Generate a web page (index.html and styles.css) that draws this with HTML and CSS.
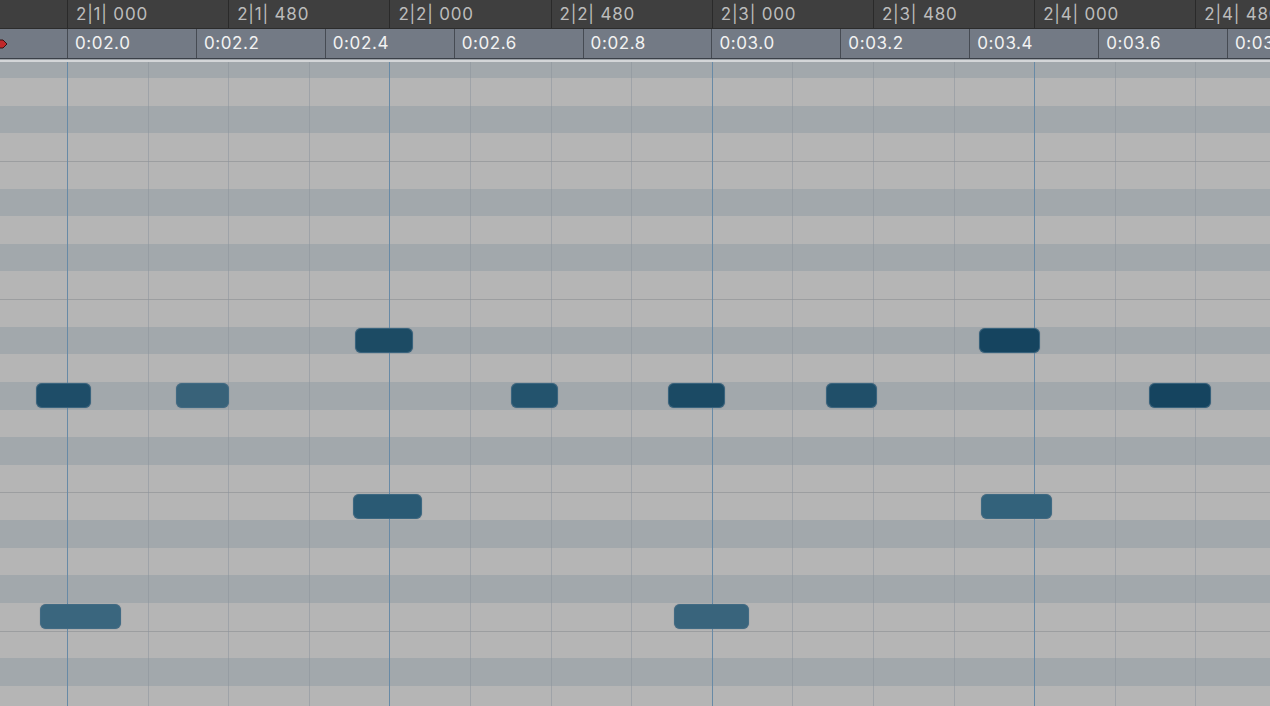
FILE: index.html
```html
<!DOCTYPE html>
<html lang="en">
<head>
    <meta charset="UTF-8">
    <title>Piano Roll</title>
    <link rel="stylesheet" href="styles.css">
</head>
<body>
    <div class="editor">
        <div class="ruler-bars">
            <div class="bar-cell">2|1| 000</div>
            <div class="bar-cell">2|1| 480</div>
            <div class="bar-cell">2|2| 000</div>
            <div class="bar-cell">2|2| 480</div>
            <div class="bar-cell">2|3| 000</div>
            <div class="bar-cell">2|3| 480</div>
            <div class="bar-cell">2|4| 000</div>
            <div class="bar-cell">2|4| 480</div>
        </div>

        <div class="ruler-time">
            <div class="time-lead">
                <svg class="locator" width="8" height="10" viewBox="0 0 8 10">
                    <path d="M-2 1 H3 L7 5 L3 9 H-2 Z" fill="#c0282a" stroke="#3a1010" stroke-width="1"/>
                </svg>
            </div>
            <div class="time-cell">0:02.0</div>
            <div class="time-cell">0:02.2</div>
            <div class="time-cell">0:02.4</div>
            <div class="time-cell">0:02.6</div>
            <div class="time-cell">0:02.8</div>
            <div class="time-cell">0:03.0</div>
            <div class="time-cell">0:03.2</div>
            <div class="time-cell">0:03.4</div>
            <div class="time-cell">0:03.6</div>
            <div class="time-cell">0:03.8</div>
        </div>
        <div class="ruler-edge"></div>

        <div class="grid">
            <!-- vertical beat / sixteenth lines -->
            <div class="grid-lines">
                <div class="col beat"></div><div class="col"></div><div class="col"></div><div class="col"></div>
                <div class="col beat"></div><div class="col"></div><div class="col"></div><div class="col"></div>
                <div class="col beat"></div><div class="col"></div><div class="col"></div><div class="col"></div>
                <div class="col beat"></div><div class="col"></div><div class="col"></div><div class="col"></div>
            </div>

            <div class="rows">
                <div class="row black"></div>
                <div class="row"></div>
                <div class="row black"></div>
                <div class="row"></div>
                <div class="row split"></div>
                <div class="row black"></div>
                <div class="row"></div>
                <div class="row black"></div>
                <div class="row"></div>
                <div class="row split"></div>
                <div class="row black">
                    <div class="note" style="left: 355px; width: 58px; background: #1c4b64;"></div>
                    <div class="note" style="left: 979px; width: 61px; background: #15445f;"></div>
                </div>
                <div class="row"></div>
                <div class="row black">
                    <div class="note" style="left: 36px; width: 55px; background: #1e4d68;"></div>
                    <div class="note" style="left: 176px; width: 53px; background: #386279;"></div>
                    <div class="note" style="left: 511px; width: 47px; background: #23536d;"></div>
                    <div class="note" style="left: 668px; width: 57px; background: #1b4a64;"></div>
                    <div class="note" style="left: 826px; width: 51px; background: #204f69;"></div>
                    <div class="note" style="left: 1149px; width: 62px; background: #15445f;"></div>
                </div>
                <div class="row"></div>
                <div class="row black"></div>
                <div class="row"></div>
                <div class="row split">
                    <div class="note" style="left: 353px; width: 69px; background: #2a5a74;"></div>
                    <div class="note" style="left: 981px; width: 71px; background: #33627b;"></div>
                </div>
                <div class="row black"></div>
                <div class="row"></div>
                <div class="row black"></div>
                <div class="row">
                    <div class="note" style="left: 40px; width: 81px; background: #3a667e;"></div>
                    <div class="note" style="left: 674px; width: 75px; background: #39647c;"></div>
                </div>
                <div class="row split"></div>
                <div class="row black"></div>
                <div class="row"></div>
            </div>
        </div>
    </div>
</body>
</html>
```

FILE: styles.css
```css
body {
    margin: 0;
    width: 1270px;
    height: 706px;
    overflow: hidden;
    background: #b5b5b5;
    font-family: Inter, "Liberation Sans", sans-serif;
}
.editor {
    display: flex;
    flex-direction: column;
    height: 706px;
}
.ruler-bars {
    display: flex;
    height: 29px;
    padding-left: 67px;
    background: #3f3f3f;
    border-bottom: 1px solid #2c2c2c;
    box-sizing: border-box;
    overflow: hidden;
}
.bar-cell {
    flex: 0 0 161.2px;
    box-sizing: border-box;
    border-left: 1px solid #2a2a2a;
    padding-left: 8px;
    color: #bcbcbc;
    font-size: 17px;
    letter-spacing: 0.8px;
    line-height: 28px;
    white-space: nowrap;
}
.ruler-time {
    display: flex;
    height: 30px;
    background: #737a85;
    border-bottom: 1px solid #3b4048;
    box-sizing: border-box;
    overflow: hidden;
}
.time-lead {
    flex: 0 0 67px;
    display: flex;
    align-items: center;
}
.locator {
    margin-top: 1px;
}
.time-cell {
    flex: 0 0 128.9px;
    box-sizing: border-box;
    border-left: 1px solid #464b53;
    padding-left: 7px;
    color: #f2f2f2;
    font-size: 17px;
    letter-spacing: 0.6px;
    line-height: 29px;
    white-space: nowrap;
}
.ruler-edge {
    height: 3px;
    background: #d4d6d8;
    border-top: 1px solid #9ea3a8;
    box-sizing: border-box;
}
.grid {
    position: relative;
    flex: 1;
    overflow: hidden;
}
.grid-lines {
    position: absolute;
    top: 0;
    bottom: 0;
    left: 0;
    display: flex;
    padding-left: 67px;
    z-index: 1;
    pointer-events: none;
}
.col {
    flex: 0 0 80.6px;
    box-sizing: border-box;
    border-left: 1px solid rgba(140, 148, 156, 0.55);
}
.col.beat {
    border-left-color: #688aa6;
}
.rows {
    display: flex;
    flex-direction: column;
    margin-top: -11.6px;
}
.row {
    position: relative;
    height: 27.64px;
    flex: 0 0 27.64px;
    background: #b5b5b5;
    box-sizing: border-box;
}
.row.black {
    background: #a2a8ac;
}
.row.split {
    border-top: 1px solid #9c9ea0;
}
.note {
    position: absolute;
    top: 1px;
    height: 25px;
    box-sizing: border-box;
    border: 1px solid rgba(70, 110, 135, 0.7);
    border-radius: 6px;
    z-index: 2;
    box-shadow: 0 0 1px rgba(40, 70, 90, 0.6);
}
```
